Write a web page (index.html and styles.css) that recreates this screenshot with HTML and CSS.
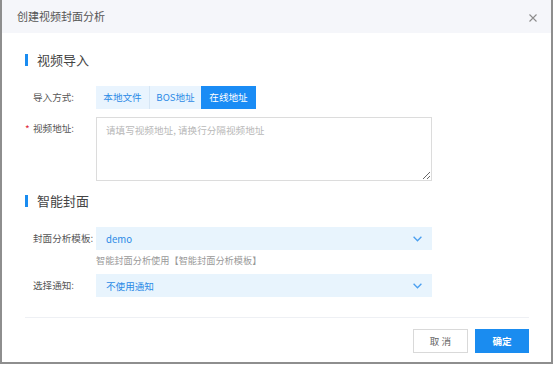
FILE: index.html
```html
<!DOCTYPE html>
<html lang="zh">
<head>
<meta charset="utf-8">
<title>创建视频封面分析</title>
<link rel="stylesheet" href="styles.css">
</head>
<body>
<div class="dialog">
  <div class="header">
    <span class="title">创建视频封面分析</span>
    <span class="close">
      <svg width="8" height="8" viewBox="0 0 8 8"><path d="M0.5 0.5L7.5 7.5M7.5 0.5L0.5 7.5" stroke="#8c8c8c" stroke-width="1.1" fill="none"/></svg>
    </span>
  </div>
  <div class="body">
    <div class="section-title s1">视频导入</div>
    <div class="row r1">
      <div class="label">导入方式:</div>
      <div class="seg">
        <span class="seg-btn b1">本地文件</span>
        <span class="seg-btn b2">BOS地址</span>
        <span class="seg-btn b3 active">在线地址</span>
      </div>
    </div>
    <div class="row r2 top">
      <div class="label req"><span class="star">*</span>视频地址:</div>
      <textarea class="area" placeholder="请填写视频地址, 请换行分隔视频地址"></textarea>
    </div>
    <div class="section-title s2">智能封面</div>
    <div class="row r3">
      <div class="label">封面分析模板:</div>
      <div class="select"><span>demo</span><svg width="9" height="6" viewBox="0 0 9 6"><path d="M0.6 0.8L4.5 4.8L8.4 0.8" stroke="#4a9ff0" stroke-width="1.3" fill="none"/></svg></div>
    </div>
    <div class="help">智能封面分析使用【智能封面分析模板】</div>
    <div class="row r4">
      <div class="label">选择通知:</div>
      <div class="select"><span>不使用通知</span><svg width="9" height="6" viewBox="0 0 9 6"><path d="M0.6 0.8L4.5 4.8L8.4 0.8" stroke="#4a9ff0" stroke-width="1.3" fill="none"/></svg></div>
    </div>
    <div class="divider"></div>
    <div class="footer">
      <button class="btn cancel">取 消</button>
      <button class="btn ok">确定</button>
    </div>
  </div>
</div>
</body>
</html>
```
FILE: styles.css
```css
* { box-sizing: border-box; }
html, body { margin: 0; padding: 0; background: #fff; }
body { font-family: "Noto Sans CJK SC", "Noto Sans", sans-serif; }

.dialog {
  width: 553px;
  height: 364px;
  border-left: 2px solid #8e8e8e;
  border-right: 2px solid #8e8e8e;
  border-bottom: 2px solid #8e8e8e;
  background: #fff;
  display: flex;
  flex-direction: column;
}

.header {
  height: 33px;
  background: #f5f6fa;
  display: flex;
  align-items: center;
  justify-content: space-between;
  padding: 0 14px 0 15px;
}
.title { font-size: 11px; color: #555; line-height: 13px; }
.close { display: flex; width: 8px; height: 8px; margin-top: 2px; }

.body { padding: 0 22px 0 23px; display: flex; flex-direction: column; }

.section-title {
  font-size: 13px;
  line-height: 13px;
  height: 13px;
  color: #444;
  display: flex;
  align-items: center;
}
.section-title::before {
  content: "";
  width: 3px;
  height: 12px;
  background: #1a8cf0;
  margin-right: 9px;
}
.s1 { margin-top: 20px; }
.s2 { margin-top: 13px; }

.row { display: flex; align-items: center; padding-left: 8px; }
.row.top { align-items: flex-start; }
.r1 { margin-top: 20px; }
.r2 { margin-top: 8px; }
.r3 { margin-top: 20px; }
.r4 { margin-top: 8px; }

.label {
  width: 63px;
  font-size: 9.6px;
  color: #555;
  line-height: 23px;
  position: relative;
  white-space: nowrap;
}
.star {
  position: absolute;
  left: -8px;
  top: 0;
  color: #e0283a;
  font-size: 10px;
}

.seg { display: flex; height: 23px; }
.seg-btn {
  font-size: 9.6px;
  line-height: 23px;
  color: #2b8ae6;
  background: #e9f4fe;
  white-space: nowrap;
  display: flex;
  justify-content: center;
}
.b1 { width: 53px; }
.b2 { width: 52px; border-left: 1px solid #d6e6f5; }
.b3 { width: 55px; }
.seg-btn.active { background: #1a8cf5; color: #fff; }

.area {
  width: 336px;
  height: 64px;
  border: 1px solid #dcdcdc;
  border-radius: 0;
  padding: 5px 9px;
  font-family: "Noto Sans CJK SC", sans-serif;
  font-size: 9.6px;
  line-height: 14px;
  resize: both;
  outline: none;
  margin: 0;
}
.area::placeholder { color: #b8b8b8; }

.select {
  width: 336px;
  height: 23px;
  background: #e8f4fd;
  display: flex;
  align-items: center;
  justify-content: space-between;
  padding: 0 10px 0 10px;
  font-size: 9.6px;
  color: #2b8ae6;
}
.select svg { margin-top: 1px; }

.help {
  margin-top: 4px;
  padding-left: 71px;
  font-size: 9.2px;
  line-height: 12px;
  color: #999;
}

.divider { margin-top: 20px; height: 1px; background: #eef0f4; }

.footer { display: flex; justify-content: flex-end; gap: 7px; margin-top: 11px; }
.btn {
  height: 24px;
  font-family: "Noto Sans CJK SC", sans-serif;
  font-size: 9.6px;
  padding: 0;
  border-radius: 0;
  cursor: pointer;
}
.cancel { width: 55px; background: #fff; border: 1px solid #d9d9d9; color: #666; }
.ok { width: 54px; background: #1a8cf0; border: 1px solid #1a8cf0; color: #fff; font-weight: bold; }
```
